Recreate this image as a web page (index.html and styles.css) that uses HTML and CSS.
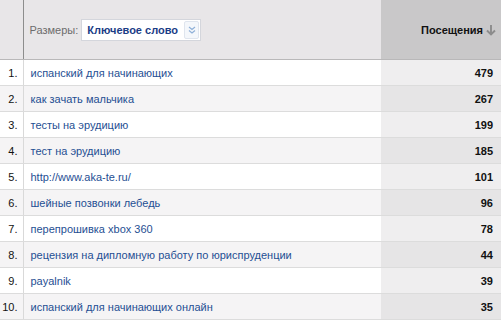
FILE: index.html
```html
<!DOCTYPE html>
<html lang="ru">
<head>
<meta charset="utf-8">
<link rel="stylesheet" href="styles.css">
</head>
<body>
<table class="report">
  <colgroup>
    <col class="c-rank">
    <col class="c-key">
    <col class="c-metric">
  </colgroup>
  <thead>
    <tr class="head">
      <th class="h-rank"></th>
      <th class="h-dim">
        <span class="dim-label">Размеры:</span>
        <span class="dim-select"><span class="dim-value">Ключевое слово</span><span class="dim-btn"><svg width="10" height="10" viewBox="0 0 10 10"><path d="M2 2 L5 4.5 L8 2 M2 5.5 L5 8 L8 5.5" fill="none" stroke="#8fb0d8" stroke-width="1.2"/></svg></span></span>
      </th>
      <th class="h-metric">Посещения<svg class="sort" width="12" height="12" viewBox="0 0 12 12"><path d="M6 1 V10 M2 6.5 L6 10.5 L10 6.5" fill="none" stroke="#8c8c8c" stroke-width="1.9"/></svg></th>
    </tr>
  </thead>
  <tbody>
    <tr><td class="rank">1.</td><td class="key"><a>испанский для начинающих</a></td><td class="num">479</td></tr>
    <tr><td class="rank">2.</td><td class="key"><a>как зачать мальчика</a></td><td class="num">267</td></tr>
    <tr><td class="rank">3.</td><td class="key"><a>тесты на эрудицию</a></td><td class="num">199</td></tr>
    <tr><td class="rank">4.</td><td class="key"><a>тест на эрудицию</a></td><td class="num">185</td></tr>
    <tr><td class="rank">5.</td><td class="key"><a>http://www.aka-te.ru/</a></td><td class="num">101</td></tr>
    <tr><td class="rank">6.</td><td class="key"><a>шейные позвонки лебедь</a></td><td class="num">96</td></tr>
    <tr><td class="rank">7.</td><td class="key"><a>перепрошивка xbox 360</a></td><td class="num">78</td></tr>
    <tr><td class="rank">8.</td><td class="key"><a>рецензия на дипломную работу по юриспруденции</a></td><td class="num">44</td></tr>
    <tr><td class="rank">9.</td><td class="key"><a>payalnik</a></td><td class="num">39</td></tr>
    <tr><td class="rank">10.</td><td class="key"><a>испанский для начинающих онлайн</a></td><td class="num">35</td></tr>
  </tbody>
</table>
</body>
</html>
```
FILE: styles.css
```css
html, body {
  margin: 0;
  padding: 0;
  background: #ffffff;
}
body {
  font-family: "Liberation Sans", Arial, Helvetica, sans-serif;
  font-size: 11px;
  color: #000;
}
.report {
  width: 501px;
  border-collapse: collapse;
  table-layout: fixed;
}
.c-rank { width: 23px; }
.c-metric { width: 120px; }

.head th {
  height: 59px;
  padding: 0;
  background: #e8e6e8;
  border-bottom: 1px solid #b9b8b9;
  vertical-align: middle;
  text-align: left;
  font-weight: normal;
}
.head .h-rank {
  border-right: 1px solid #8d8d8d;
}
.head .h-dim {
  padding-left: 6px;
  white-space: nowrap;
}
.dim-label {
  color: #6c6c6c;
  font-size: 11px;
  vertical-align: middle;
}
.dim-select {
  display: inline-flex;
  align-items: center;
  margin-left: 0;
  height: 20px;
  background: #ffffff;
  border: 1px solid #d4d6dc;
  vertical-align: middle;
}
.dim-value {
  color: #1b3d86;
  font-weight: bold;
  font-size: 11px;
  padding: 0 6px 0 5px;
}
.dim-btn {
  display: flex;
  align-items: center;
  justify-content: center;
  width: 13px;
  height: 16px;
  margin-right: 1px;
  border: 1px solid #dfe5ee;
  border-radius: 2px;
  background: #f4f7fb;
}
.head .h-metric {
  background: #c9c8c9;
  text-align: right;
  padding-right: 4px;
  font-weight: bold;
  color: #111;
  white-space: nowrap;
}
.sort {
  vertical-align: -2px;
  margin-left: 2px;
}

tbody td {
  height: 25px;
  padding: 0;
  border-bottom: 1px solid #dcdcdc;
  vertical-align: middle;
}
tbody tr:nth-child(odd) td { background: #ffffff; }
tbody tr:nth-child(even) td { background: #f5f4f5; }
tbody tr:nth-child(odd) td.num { background: #efeeef; }
tbody tr:nth-child(even) td.num { background: #e6e5e6; }

td.rank {
  text-align: right;
  padding-right: 5px;
  border-right: 1px solid #d9d9d9;
  color: #111;
}
td.key {
  padding-left: 7px;
  white-space: nowrap;
  overflow: hidden;
}
td.key a {
  color: #1f4f93;
  text-decoration: none;
}
td.num {
  text-align: right;
  padding-right: 8px;
  font-weight: bold;
  color: #111;
}
```
